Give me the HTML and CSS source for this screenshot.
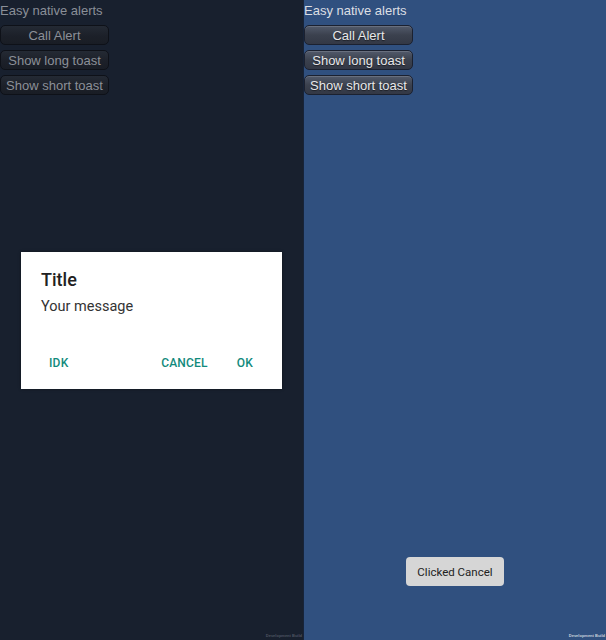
FILE: index.html
```html
<!DOCTYPE html>
<html>
<head>
<meta charset="utf-8">
<link rel="stylesheet" href="styles.css">
</head>
<body>
<div class="screens">
  <section class="panel panel--dim">
    <div class="menu">
      <div class="menu-title">Easy native alerts</div>
      <button class="ubtn">Call Alert</button>
      <button class="ubtn">Show long toast</button>
      <button class="ubtn">Show short toast</button>
    </div>
    <div class="dev">Development Build</div>
    <div class="modal">
      <div class="dialog">
        <div class="dlg-title">Title</div>
        <div class="dlg-msg">Your message</div>
        <div class="dlg-actions">
          <span class="dlg-btn dlg-btn--idk">IDK</span>
          <span class="spacer"></span>
          <span class="dlg-btn dlg-btn--cancel">CANCEL</span>
          <span class="dlg-btn dlg-btn--ok">OK</span>
        </div>
      </div>
    </div>
  </section>
  <section class="panel panel--live">
    <div class="menu">
      <div class="menu-title">Easy native alerts</div>
      <button class="ubtn">Call Alert</button>
      <button class="ubtn">Show long toast</button>
      <button class="ubtn">Show short toast</button>
    </div>
    <div class="dev">Development Build</div>
    <div class="toast">Clicked Cancel</div>
  </section>
</div>
</body>
</html>
```
FILE: styles.css
```css
html, body {
  margin: 0;
  padding: 0;
}
body {
  width: 606px;
  height: 640px;
  overflow: hidden;
  font-family: "Liberation Sans", Arial, sans-serif;
}
.screens {
  display: flex;
  width: 606px;
  height: 640px;
}
.panel {
  position: relative;
  width: 303px;
  height: 640px;
  box-sizing: border-box;
}
.panel--dim {
  background: #18202e;
}
.panel--live {
  background: #30507f;
  border-left: 1px solid #17243a;
}
.menu {
  display: flex;
  flex-direction: column;
  align-items: flex-start;
  gap: 5px;
}
.menu-title {
  font-size: 13px;
  line-height: 21px;
  height: 20px;
  padding-left: 0;
}
.panel--dim .menu-title { color: #8a8f98; }
.panel--live .menu-title { color: #dcdfe4; }
.ubtn {
  width: 109px;
  height: 20px;
  margin: 0;
  padding: 0;
  border-radius: 5px;
  font-family: "Liberation Sans", Arial, sans-serif;
  font-size: 13px;
  line-height: 19px;
  text-align: center;
}
.panel--dim .ubtn {
  background: linear-gradient(#242a34, #1c2029 55%, #191d25);
  border: 1px solid #0e1118;
  color: #8c9098;
}
.panel--live .ubtn {
  background: linear-gradient(#525a6b, #3b414e 50%, #333845);
  border: 1px solid #1b2130;
  color: #e8e8ea;
  box-shadow: inset 0 1px 0 rgba(255,255,255,0.14);
  text-shadow: 0 1px 1px rgba(0,0,0,0.5);
}
.dev {
  position: absolute;
  right: 1px;
  bottom: 2px;
  font-size: 4px;
  line-height: 5px;
  font-weight: bold;
}
.panel--dim .dev { color: #4d5461; }
.panel--live .dev { color: #c8d0dc; }
.modal {
  position: absolute;
  inset: 0;
  display: flex;
  align-items: center;
  justify-content: center;
}
.dialog {
  width: 261px;
  height: 137px;
  box-sizing: border-box;
  background: #ffffff;
  padding: 16px 20px 0 20px;
  display: flex;
  flex-direction: column;
  font-family: Roboto, "Noto Sans", sans-serif;
  box-shadow: 0 0 3px rgba(0,0,0,0.4);
}
.dlg-title {
  font-size: 18px;
  font-weight: 500;
  color: #212121;
  line-height: 24px;
}
.dlg-msg {
  font-size: 14.5px;
  color: #333333;
  line-height: 20px;
  margin-top: 5px;
}
.dlg-actions {
  display: flex;
  align-items: center;
  margin-top: 39px;
  margin-left: -12px;
  margin-right: -12px;
}
.spacer { flex: 1; }
.dlg-btn {
  font-size: 12px;
  font-weight: 500;
  color: #128a7c;
  line-height: 14px;
  letter-spacing: 0.2px;
}
.dlg-btn--idk { padding-left: 20px; }
.dlg-btn--cancel { padding-right: 29px; }
.dlg-btn--ok { padding-right: 21px; }
.toast {
  position: absolute;
  left: 102px;
  top: 557px;
  width: 98px;
  height: 29px;
  background: #d6d6d6;
  border-radius: 4px;
  color: #222222;
  font-family: Roboto, "Noto Sans", sans-serif;
  font-size: 11.5px;
  display: flex;
  align-items: center;
  justify-content: center;
}
```
